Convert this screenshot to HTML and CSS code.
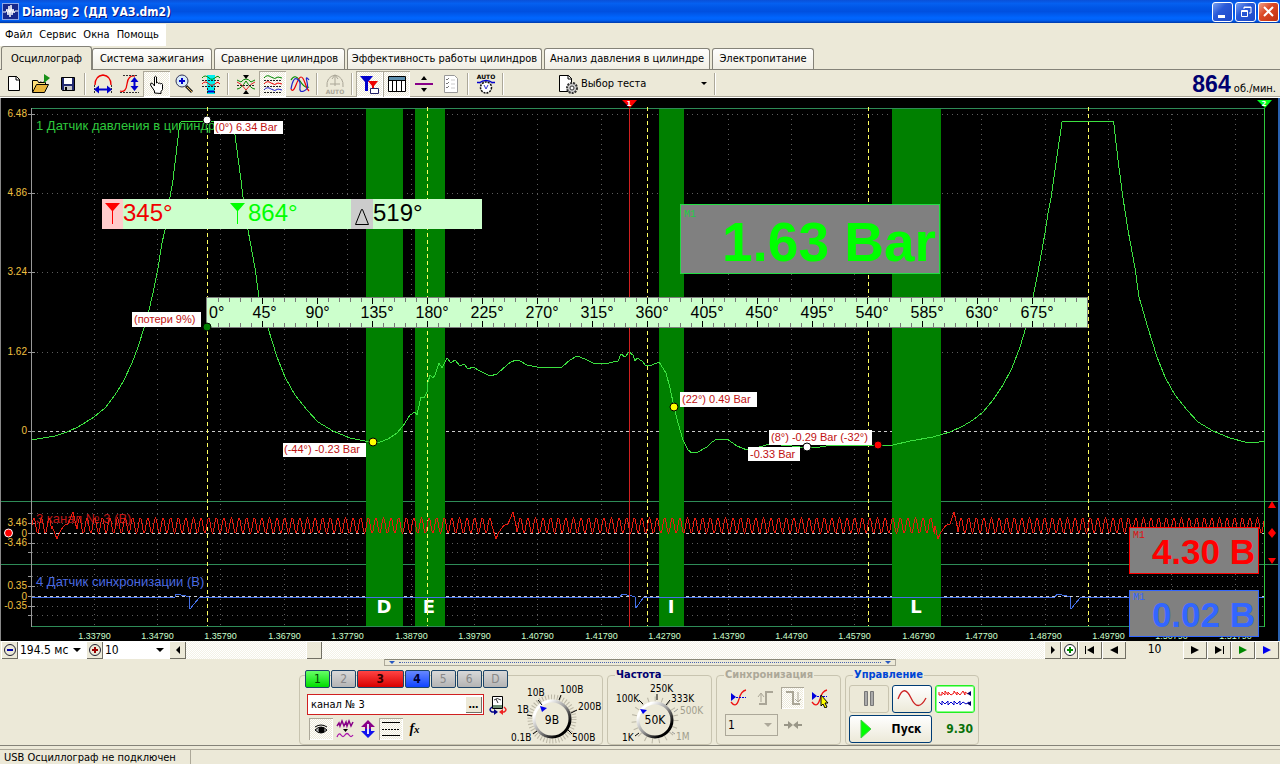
FILE: index.html
```html
<!DOCTYPE html>
<html lang="ru">
<head>
<meta charset="utf-8">
<title>Diamag 2 (ДД УАЗ.dm2)</title>
<link rel="stylesheet" href="styles.css">
</head>
<body>
<header class="titlebar">
  <svg class="app-icon" width="17" height="17" viewBox="0 0 17 17"><rect x=".5" y=".5" width="16" height="16" fill="#16288c" stroke="#8fa8e8"/><path d="M1 9h3l1-3 1 6 1-9 1 11 1-12 1 10 1-6 1 4 1-2h3" fill="none" stroke="#fff"/></svg>
  <h1 class="title">Diamag 2 (ДД УАЗ.dm2)</h1>
  <button class="win-btn" aria-label="Свернуть"><svg width="18" height="18" viewBox="0 0 18 18"><path d="M4 12h7v3H4z" fill="#fff"/></svg></button>
  <button class="win-btn" aria-label="Восстановить"><svg width="18" height="18" viewBox="0 0 18 18" fill="none" stroke="#fff"><path d="M7 6V4h7v6h-2M7 4.500h7"/><path d="M4.500 7.500h6v6h-6zM4 8.500h7"/></svg></button>
  <button class="win-btn close" aria-label="Закрыть"><svg width="18" height="18" viewBox="0 0 18 18"><path d="M4 4l9 9M13 4l-9 9" stroke="#fff" stroke-width="2"/></svg></button>
</header>
<nav class="menubar"><a href="#">Файл</a><a href="#">Сервис</a><a href="#">Окна</a><a href="#">Помощь</a></nav>
<div class="tabs" role="tablist">
  <button class="tab active t1" role="tab" aria-selected="true">Осциллограф</button>
  <button class="tab t2" role="tab">Система зажигания</button>
  <button class="tab t3" role="tab">Сравнение цилиндров</button>
  <button class="tab t4" role="tab">Эффективность работы цилиндров</button>
  <button class="tab t5" role="tab">Анализ давления в цилиндре</button>
  <button class="tab t6" role="tab">Электропитание</button>
</div>
<div class="toolbar">
  <button class="tool" aria-label="Новый"><svg width="22" height="22" viewBox="0 0 22 22"><path d="M5.500 3.500h8l3 3v11h-11z" fill="#fff" stroke="#000"/><path d="M13 3v4h4" fill="none" stroke="#000"/></svg></button>
  <button class="tool" aria-label="Открыть"><svg width="22" height="22" viewBox="0 0 22 22"><path d="M2.500 19V7.500h5l1 2h7V12" fill="#ffe07a" stroke="#000"/><path d="M2.500 19.500l4-8h12l-4 8z" fill="#e8b53c" stroke="#000"/><path d="M14 1l6 4-6 5z" fill="#189018"/><path d="M14 9q-1 1-4 0" stroke="#000" fill="none"/></svg></button>
  <button class="tool" aria-label="Сохранить"><svg width="22" height="22" viewBox="0 0 22 22"><path d="M4.500 4.500h13v13h-12l-1-1z" fill="#222a72" stroke="#000"/><path d="M7 5h8v6H7z" fill="#fff"/><path d="M7 13h8v4H7z" fill="#c8c8c8"/><path d="M8 14h2v3H8z"/></svg></button>
  <i class="sep"></i>
  <button class="tool" aria-label="Период"><svg width="24" height="22" viewBox="0 0 24 22"><path d="M4 12q0-9 8-10 8 1 8 10" fill="none" stroke="#e00" stroke-width="1.300"/><path d="M3.500 12v8M20.500 12v8" stroke="#333" stroke-dasharray="2 1"/><path d="M5 16.500h14" stroke="#00c" stroke-width="2"/><path d="M3 16.500l5-4v8zM21 16.500l-5-4v8z" fill="#00c"/></svg></button>
  <button class="tool" aria-label="Амплитуда"><svg width="24" height="22" viewBox="0 0 24 22"><path d="M2 18q6 2 7-7 1-9 8-8" fill="none" stroke="#e00" stroke-width="1.300"/><path d="M5 2.500h14M2 19.500h19" stroke="#333" stroke-dasharray="2 1"/><path d="M16.500 6v10" stroke="#00c" stroke-width="2"/><path d="M16.500 4l4 5h-8zM16.500 18l4-5h-8z" fill="#00c"/></svg></button>
  <button class="tool on" aria-label="Рука"><svg width="22" height="22" viewBox="0 0 22 22"><path d="M8.500 20v-2l-4-6 .5-2 1.500.5 2 2.500V4q1-1.500 2 0v6q1-1.500 2 .5 1-1.500 2 .5 1.500-1.500 2 .5v5l-1.500 2v2z" fill="#fff" stroke="#000"/></svg></button>
  <button class="tool" aria-label="Увеличить"><svg width="22" height="22" viewBox="0 0 22 22"><circle cx="9" cy="8" r="6" fill="#d8eaf8" stroke="#335"/><path d="M9 5v6M6 8h6" stroke="#00c" stroke-width="2"/><path d="M13 13l6 6" stroke="#222" stroke-width="3"/><path d="M14 14l5 5" stroke="#e8b04a"/></svg></button>
  <button class="tool" aria-label="Фрагмент"><svg width="24" height="22" viewBox="0 0 24 22"><path d="M8 2h8v19H8z" fill="#0ee"/><g fill="none"><path d="M3 5q3-4 7 0 3 3 7-1 2-2 4 1" stroke="#080"/><path d="M3 11q3-4 7 0 3 3 7-1 2-2 4 1" stroke="#e00"/><path d="M3 7.500h18M3 13.500h18M8.500 15v6M15.500 15v6" stroke="#222" stroke-dasharray="2 1"/><path d="M9 18.500h6" stroke="#00c" stroke-width="2"/></g></svg></button>
  <i class="sep"></i>
  <button class="tool" aria-label="Сжать"><svg width="24" height="22" viewBox="0 0 24 22"><g fill="none"><path d="M3 7l4 2q5-6 10 0l4-2" stroke="#080"/><path d="M3 16q4 0 9-8 5 8 9 8" stroke="#080"/><path d="M3 9q4 1 9 8 5-7 9-8" stroke="#d22"/><path d="M3 12.500h18" stroke="#222" stroke-dasharray="2 1"/></g><path d="M9 2h6l-3 4zM9 21h6l-3-4z"/></svg></button>
  <button class="tool on" aria-label="Раздельно"><svg width="24" height="22" viewBox="0 0 24 22"><g fill="none"><path d="M3 5q3-4 7-1t7 0l4 1" stroke="#080"/><path d="M3 11q3-4 7-1t7 0l4 1" stroke="#e00"/><path d="M3 17q3-4 7-1t7 0l4 1" stroke="#22c"/><path d="M3 7.500h18M3 13.500h18M3 19.500h18" stroke="#222" stroke-dasharray="2 1"/></g></svg></button>
  <button class="tool" aria-label="Вместе"><svg width="24" height="22" viewBox="0 0 24 22" fill="none" stroke-width="1.200"><path d="M3 7q4-7 9 1t9 6" stroke="#080"/><path d="M3 16q2 4 5-4t5-8 4 6 4 8" stroke="#e00"/><path d="M3 16q2-12 6-10t3 8 4 4 3-9 2-2" stroke="#22c"/></svg></button>
  <i class="sep"></i>
  <button class="tool" aria-label="Автомасштаб" disabled><svg width="24" height="24" viewBox="0 0 24 24"><path d="M4 15q-1-10 8-12 9 2 8 12M12 4v10M9 7l3-4 3 4M7 12h10" fill="none" stroke="#aaa697"/><text class="ico-text dim" x="12" y="22">AUTO</text></svg></button>
  <i class="sep"></i>
  <button class="tool on" aria-label="Маркеры"><svg width="22" height="22" viewBox="0 0 22 22"><path d="M1 3h13l-5 6v9H6V9z" fill="#00c"/><path d="M9 8h10l-4 5v5h-2v-5z" fill="#e00"/><path d="M11.500 15.500h8v5h-8z" fill="#fff" stroke="#226"/></svg></button>
  <button class="tool on" aria-label="Таблица"><svg width="22" height="22" viewBox="0 0 22 22"><path d="M2.500 3.500h17v15h-17z" fill="#fff" stroke="#000"/><path d="M3 4h16v3H3z" fill="#5d8fae"/><path d="M2 7.500h18M6.500 7v11M10.500 7v11M15.500 7v11" stroke="#000"/></svg></button>
  <button class="tool" aria-label="Разделить"><svg width="22" height="22" viewBox="0 0 22 22"><path d="M2 10h18v2H2z" fill="#808"/><path d="M8 7h6l-3-4zM8 15h6l-3 4z"/></svg></button>
  <button class="tool" aria-label="Список"><svg width="22" height="22" viewBox="0 0 22 22"><path d="M4.500 2.500h10l3 3v14h-13z" fill="#fff" stroke="#999"/><path d="M6 6l1 1 2-2M6 10l1 1 2-2M6 14l1 1 2-2" fill="none" stroke="#777"/><path d="M11 7h4M11 11h4M11 15h4" stroke="#ccc"/></svg></button>
  <i class="sep"></i>
  <button class="tool" aria-label="Авто"><svg width="24" height="24" viewBox="0 0 24 24"><text class="ico-text" x="12" y="7">AUTO</text><path d="M5 11q7-5 14 0M3 10.500h4M17 10.500h4" stroke="#00c" fill="none" stroke-width="1.500"/><circle cx="12" cy="15.500" r="5.500" fill="#fff" stroke="#111" stroke-width="1.500" stroke-dasharray="2 1"/><path d="M10 13l2 4 2-4" fill="none" stroke="#33c"/></svg></button>
  <i class="sep"></i>
  <button class="test-pick"><svg width="22" height="22" viewBox="0 0 22 22"><path d="M2.500 2.500h9l3 3v13h-12z" fill="#fff" stroke="#000"/><path d="M11 2v4h4" fill="none" stroke="#000"/><circle cx="15" cy="15" r="5" fill="#ccc" stroke="#333" stroke-width="2" stroke-dasharray="2 1"/><circle cx="15" cy="15" r="2" fill="#fff" stroke="#333"/></svg><span>Выбор теста</span><i class="caret"></i></button>
  <i class="sep"></i>
  <div class="rpm"><b>864</b> об./мин.</div>
</div>

<main class="scope">
<svg class="plot" viewBox="0 98 1280 543" role="img" aria-label="Осциллограмма">
  <g id="grid" class="grid"></g>
  <g class="axis">
    <path class="zero" d="M32 431.500H1264M32 533.500H1264M32 596.500H1264"/>
    <path class="frame" d="M31 108.500H1264M1 501.500H1278M1 564.500H1278M31 626.500H1264"/>
    <path class="left" d="M31.500 108V627M28 114.500h7M28 193.500h7M28 272.500h7M28 352.500h7M28 431.500h7M28 513.500h4M28 523.500h7M28 533.500h7M28 543.500h7M28 552.500h4M28 576.500h4M28 586.500h7M28 596.500h7M28 606.500h7M28 615.500h4"/>
  </g>
  <g class="bands"><rect x="366" y="109" width="37" height="517"/><rect x="415" y="109" width="30" height="517"/><rect x="659" y="109" width="25" height="517"/><rect x="892" y="109" width="49" height="517"/></g>
  <g class="phase"><text x="384" y="613">D</text><text x="429" y="613">E</text><text x="671" y="613">I</text><text x="916" y="613">L</text></g>
  <path class="tdc" d="M207.500 107V626M427.500 107V626M647.500 107V626M868.500 107V626M1088.500 107V626"/>
  <g class="ch"><text class="c1" x="36" y="130">1 Датчик давления в цилиндр</text><text class="c3" x="36" y="523">3 канал № 3 (В)</text><text class="c4" x="36" y="586">4 Датчик синхронизации (В)</text></g>
  <g class="scale-y">
    <text x="27" y="117">6.48</text><text x="27" y="196">4.86</text><text x="27" y="275">3.24</text><text x="27" y="355">1.62</text><text x="27" y="434">0</text>
    <text x="27" y="526">3.46</text><text x="27" y="537">0</text><text x="27" y="546">-3.46</text><text x="27" y="589">0.35</text><text x="27" y="600">0</text><text x="27" y="609">-0.35</text>
  </g>
  <g id="scale-x" class="scale-x"></g>
  <polyline class="trace c1" points="32,440 43,438 55,436 67,432 78,427 94,417 105,408 115,395 123,382 132,363 138,347 144,328 149,310 153,293 158,268 162,243 165,230 170,197 173,180 178,138 180,123 182,121 232,121 234,126 235,135 241,180 243,197 248,230 255,268 259,297 268,328 277,357 285,377 295,395 307,410 318,422 333,431 350,438 365,441 373,442 380,442 388,439 397,433 403,426 410,415 415,412 417,415 421,397 424,398 427,392 428,382 430,375 433,378 435,375 439,363 442,368 447,358 451,363 455,360 460,366 464,364 468,369 473,367 480,371 490,376 497,374 507,365 511,362 516,360 520,361 527,365 537,367 555,368 562,367 570,360 577,356 585,359 593,363 605,364 613,362 618,361 621,354 625,357 629,352 633,355 635,361 637,358 642,361 646,366 652,365 659,362 666,373 670,388 674,407 678,423 683,440 688,450 692,453 698,452 707,447 712,442 717,439 727,439 737,446 747,450 759,447 770,444 792,446 800,447 820,447 833,445 873,445 893,445 910,441 933,437 950,432 963,426 973,420 983,412 993,400 1003,385 1012,368 1020,347 1026,327 1033,297 1038,272 1045,233 1048,213 1051,198 1055,170 1062,122 1063,121 1113,121 1114,125 1118,160 1123,198 1128,230 1135,268 1139,297 1148,328 1157,357 1165,377 1175,395 1187,410 1198,422 1213,431 1230,438 1245,442 1254,443 1264,441"/>
  <polyline id="ignition" class="trace c3"/>
  <polyline class="trace c4" points="32,597 175,597 176,594 186,596 189,597 190,609 199,598 210,597 620,597 622,594 632,596 635,597 636,608 643,598 653,597 1055,597 1057,594 1067,596 1070,597 1071,609 1080,598 1090,597 1264,597"/>
  <path class="cursor c3" d="M629.500 108V627"/><path class="cursor c2" d="M1264.500 108V627"/>
  <g class="flag"><path d="M622 100h15l-7 8z" fill="#f00"/><path d="M1257 100h15l-7 8z" fill="#0f2"/><text x="629" y="106">1</text><text x="1264" y="106">2</text></g>
  <path d="M1272 501l4 7h-8zM1272 528l4 5-4 5-4-5zM1272 564l4-6h-8z" fill="#f00"/><circle cx="8.500" cy="533" r="4" fill="#f00" stroke="#fff"/>

  <g class="angles">
    <rect x="102" y="199" width="380" height="30" fill="#cfc"/><rect x="102" y="199" width="21" height="30" fill="#fcc"/><rect x="351" y="199" width="22" height="30" fill="#ccc"/>
    <path d="M105 203h15l-7 8v13h-1v-13z" fill="#f00"/><path d="M230 203h15l-7 8v13h-1v-13z" fill="#0f0"/><path d="M355.500 224.500h13l-6-15h-1z" fill="none" stroke="#000"/>
    <text x="123" y="221" fill="#f00000">345°</text><text x="248" y="221" fill="#0f0">864°</text><text x="373" y="221" fill="#000">519°</text>
  </g>
  <g class="ruler"><rect x="206.500" y="297.500" width="881" height="30"/><g id="ruler"></g></g>
  <g class="meter">
    <rect x="680.500" y="204.500" width="259" height="69" stroke="#2d4"/><text class="m" x="684" y="217" fill="#2c4">M1</text><text class="big" x="936" y="261" fill="#0f0">1.63 Bar</text>
    <rect x="1129.500" y="527.500" width="129" height="46" stroke="#f00"/><text class="m" x="1133" y="538" fill="#d11">M1</text><text class="mid" x="1255" y="564" fill="#f00">4.30 В</text>
    <rect x="1129.500" y="590.500" width="129" height="46" stroke="#36f"/><text class="m" x="1133" y="600" fill="#36f">M1</text><text class="mid" x="1255" y="627" fill="#36f">0.02 В</text>
  </g>
  <g class="note">
    <rect x="214" y="121" width="69" height="13"/><text x="215" y="131">(0°) 6.34 Bar</text>
    <rect x="132" y="312" width="69" height="15"/><text x="134" y="323">(потери 9%)</text>
    <rect x="283" y="443" width="83" height="14"/><text x="284" y="453">(-44°) -0.23 Bar</text>
    <rect x="680" y="392" width="77" height="15"/><text x="682" y="403">(22°) 0.49 Bar</text>
    <rect x="748" y="447" width="52" height="14"/><text x="750" y="458">-0.33 Bar</text>
    <rect x="769" y="430" width="103" height="15"/><text x="771" y="441">(8°) -0.29 Bar (-32°)</text>
  </g>
  <g stroke="#000"><circle cx="207" cy="120" r="4" fill="#fff"/><circle cx="207" cy="327" r="4" fill="#008000"/><circle cx="373" cy="442" r="4" fill="#ff0"/><circle cx="674" cy="407" r="4" fill="#ff0"/><circle cx="807" cy="447" r="4" fill="#fff"/><circle cx="878" cy="445" r="4" fill="red"/></g>
  <path d="M.500 98V641" stroke="#888"/><path d="M1279 98V641" stroke="#2a62b0" stroke-width="2"/>
</svg>
</main>

<div class="timebar">
  <button class="tb" aria-label="Уменьшить"><svg width="14" height="14" viewBox="0 0 14 14"><circle cx="7" cy="7" r="5.500" fill="none" stroke="#223"/><path d="M4 7h6" stroke="#00a" stroke-width="2"/></svg></button>
  <label class="pick span"><select aria-label="Развёртка"><option>194.5 мс</option></select></label>
  <button class="tb" aria-label="Увеличить"><svg width="14" height="14" viewBox="0 0 14 14"><circle cx="7" cy="7" r="5.500" fill="none" stroke="#223"/><path d="M4 7h6M7 4v6" stroke="#900" stroke-width="2"/></svg></button>
  <label class="pick mult"><select aria-label="Множитель"><option>10</option></select></label>
  <button class="tb" aria-label="Влево"><svg width="10" height="10" viewBox="0 0 10 10"><path d="M7 1v8L3 5z"/></svg></button>
  <div class="track"><i class="thumb"></i></div>
  <button class="tb" aria-label="Вправо"><svg width="10" height="10" viewBox="0 0 10 10"><path d="M3 1v8l4-4z"/></svg></button>
  <button class="tb" aria-label="Добавить"><svg width="14" height="14" viewBox="0 0 14 14"><circle cx="7" cy="7" r="5.500" fill="#fff" stroke="#223"/><path d="M4 7h6M7 4v6" stroke="#080" stroke-width="2"/></svg></button>
  <button class="tb w" aria-label="В начало"><svg width="14" height="10" viewBox="0 0 14 10"><path d="M2 1h1v8H2zM4 5l7-4v8z"/></svg></button>
  <button class="tb w" aria-label="Назад"><svg width="14" height="10" viewBox="0 0 14 10"><path d="M3 5l8-4v8z"/></svg></button>
  <output class="page-no">10</output>
  <button class="tb w" aria-label="Вперёд"><svg width="14" height="10" viewBox="0 0 14 10"><path d="M11 5L3 1v8z"/></svg></button>
  <button class="tb w" aria-label="В конец"><svg width="14" height="10" viewBox="0 0 14 10"><path d="M11 1h1v8h-1zM10 5L3 1v8z"/></svg></button>
  <button class="tb w" aria-label="Воспроизвести"><svg width="14" height="10" viewBox="0 0 14 10"><path d="M11 5L3 1v8z" fill="#080"/></svg></button>
  <button class="tb w" aria-label="Воспроизвести всё"><svg width="14" height="10" viewBox="0 0 14 10"><path d="M11 5L3 1v8z" fill="#00e"/></svg></button>
</div>
<div class="split-row"><div class="splitter"><i></i><b></b><i></i></div></div>

<section class="panel">
  <div class="group channel">
    <div class="ch-left">
      <div class="ch-buttons"><button class="chb g">1</button><button class="chb">2</button><button class="chb r">3</button><button class="chb b">4</button><button class="chb">5</button><button class="chb">6</button><button class="chb">D</button></div>
      <div class="ch-name"><div class="name-box"><input type="text" value="канал № 3" aria-label="Название канала"><button class="dots" aria-label="Выбрать">…</button></div>
        <svg width="20" height="20" viewBox="0 0 20 20"><path d="M4.500 1.500h10v12h-10z" fill="#fff" stroke="#000"/><path d="M5 10h9v3H5z" fill="#6b8b70"/><path d="M6 5q3-3 7 0M8 4l2 4" stroke="#333" fill="none"/><path d="M4 12q-4 3 0 5h3" fill="none" stroke="#008" stroke-width="1.500"/><path d="M6 14l4 3-4 3z" fill="#008"/><path d="M16 12q4 3 0 5h-2" fill="none" stroke="#e22" stroke-width="1.500"/><path d="M15 14l-4 3 4 3z" fill="#e22"/></svg></div>
      <div class="ch-tools">
        <button class="mini on" aria-label="Видимость"><svg width="20" height="20" viewBox="0 0 20 20"><path d="M4 11q6-6 12 0-6 6-12 0z" fill="#bbb" stroke="#000"/><circle cx="10.500" cy="11" r="3"/><path d="M4 8q6-4 12 0" stroke="#000" fill="none"/></svg></button>
        <button class="mini" aria-label="Фильтр"><svg width="20" height="20" viewBox="0 0 20 20"><path d="M2 7l2-3 1 3 2-5 2 5 2-4 1 4 2-5 2 5 2-4" fill="none" stroke="#808" stroke-width="1.500"/><path d="M8 10h5l-2.500 3z"/><path d="M2 18q2-5 4-2t4 0 4 0 4 0" fill="none" stroke="#a1a" stroke-width="1.300"/></svg></button>
        <button class="mini" aria-label="Инверсия"><svg width="20" height="20" viewBox="0 0 20 20"><path d="M10 1l7 7h-4v2H7V8H3z" fill="#808"/><path d="M10 19l7-7h-4v-2H7v2H3z" fill="#11e"/><path d="M10 5v10" stroke="#e8e0f8" stroke-width="2"/></svg></button>
        <button class="mini on" aria-label="Сетка"><svg width="20" height="20" viewBox="0 0 20 20"><path d="M1 3.500h18M1 16.500h18" stroke="#000"/><path d="M1 10.500h18" stroke="#000" stroke-dasharray="2 1"/></svg></button>
        <button class="mini fx">f<small>x</small></button>
      </div>
    </div>
    <svg class="knob" width="94" height="66" viewBox="508 680 94 66" role="img" aria-label="9В">
      <defs><linearGradient id="rim" x1="0" y1="0" x2="1" y2="1"><stop offset=".2" stop-color="#fff"/><stop offset=".5" stop-color="#999"/><stop offset=".8" stop-color="#000"/></linearGradient></defs>
      <circle class="teeth" cx="552" cy="719" r="22"/><circle cx="552" cy="719" r="18" fill="#ece9d8" stroke="url(#rim)" stroke-width="3"/><path d="M540 706l7 2-5 4z" fill="#00e"/>
      <path d="M538 700l4 5M561 695l-2 5M577 710l-6 3M527 715l5 1M533 734l4-3M572 734l-4-4" stroke="#000"/>
      <g class="knob-t"><text x="527" y="696">10В</text><text x="560" y="693">100В</text><text x="517" y="713">1В</text><text x="578" y="710">200В</text><text x="511" y="741">0.1В</text><text x="572" y="741">500В</text><text class="val" x="552" y="724">9В</text></g>
    </svg>
  </div>
  <fieldset class="group freq"><legend>Частота</legend>
    <svg class="knob" width="98" height="62" viewBox="611 682 98 62" role="img" aria-label="50K">
      <circle class="teeth wide" cx="656" cy="720" r="21"/><circle cx="656" cy="720" r="17" fill="#ece9d8" stroke="url(#rim)" stroke-width="3"/><path d="M641 709l7 1-4 4z" fill="#00e"/>
      <path d="M640 700l4 4M658 694v6M671 700l-4 5M636 736l4-3" stroke="#000"/><path d="M679 709l-4 3M676 734l-3-2" stroke="#999"/>
      <g class="knob-t"><text x="651" y="692">250K</text><text x="617" y="702">100K</text><text x="672" y="702">333K</text><text class="off" x="681" y="714">500K</text><text x="623" y="741">1K</text><text class="off" x="677" y="740">1M</text><text class="val" x="656" y="724">50K</text></g>
    </svg>
  </fieldset>
  <fieldset class="group sync"><legend>Синхронизация</legend>
    <div class="sync-row">
      <button class="mini" aria-label="Уровень"><svg width="20" height="20" viewBox="0 0 20 20"><path d="M2 14q5 7 8-3 2-8 7-9" fill="none" stroke="#e11" stroke-width="1.300"/><path d="M2 5l5 4-5 4z" fill="#00d"/><path d="M7 9.500h10" stroke="#00d" stroke-dasharray="2 1"/></svg></button>
      <button class="mini" aria-label="Фронт"><svg width="20" height="20" viewBox="0 0 20 20" fill="none" stroke="#aaa697" stroke-width="2"><path d="M3 16h7V4h7"/><path d="M5 14V6M2 9l3-4 3 4" stroke-width="1"/></svg></button>
      <button class="mini on" aria-label="Спад"><svg width="20" height="20" viewBox="0 0 20 20" fill="none" stroke="#aaa697" stroke-width="2"><path d="M3 4h7v12h7"/><path d="M15 4v10M12 11l3 3 3-3" stroke-width="1"/></svg></button>
      <button class="mini" aria-label="Курсор"><svg width="20" height="20" viewBox="0 0 20 20"><path d="M2 14q5 7 8-3 2-8 7-9" fill="none" stroke="#e11" stroke-width="1.300"/><path d="M2 4l5 4-5 4z" fill="#00d"/><path d="M7 8.500h10" stroke="#00d" stroke-dasharray="2 1"/><path d="M11 7v11l2-2 2 4 2-1-2-4h3z" fill="#ff0" stroke="#000"/></svg></button>
    </div>
    <div class="sync-row two"><label class="pick sync-pick"><select disabled aria-label="Канал синхронизации"><option>1</option></select></label>
      <svg width="20" height="12" viewBox="0 0 20 12"><path d="M1 6h5M14 6h5" stroke="#999687" stroke-width="2"/><path d="M5 2v8l5-4zM15 2v8l-5-4z" fill="#999687"/></svg></div>
  </fieldset>
  <fieldset class="group ctrl"><legend>Управление</legend>
    <div class="ctrl-grid">
      <button class="big-btn off" aria-label="Пауза"><svg width="16" height="18" viewBox="0 0 16 18"><path d="M3.500 1.500h3v14h-3zM9.500 1.500h3v14h-3z" fill="#aaa" stroke="#777"/></svg></button>
      <button class="big-btn" aria-label="Один"><svg width="32" height="22" viewBox="0 0 32 22"><path d="M2 11Q8-5 15 10t15 0" fill="none" stroke="#c22" stroke-width="1.300"/></svg></button>
      <button class="big-btn sel" aria-label="Непрерывно"><svg width="34" height="22" viewBox="0 0 34 22"><path d="M1 4v3h3V4l3 3V3l3 4V4l3 3 3-2V3l3 4V4l3 3 3-4 2 4V4l3 2" fill="none" stroke="#e11"/><path d="M1 14l3 3v-4l3 3 3-3v4l3-3 3 3v-4l3 3 3-3v4l3-3 3 2 3-2" fill="none" stroke="#00c"/><path d="M33 3v5l-4-2.500zM33 13v5l-4-2.500z" fill="#006"/></svg></button>
      <button class="big-btn start"><svg width="12" height="20" viewBox="0 0 12 20"><path d="M1 1l10 9-10 9z" fill="#0f0" stroke="#4c4"/></svg><span>Пуск</span></button>
      <output class="ver">9.30</output>
    </div>
  </fieldset>
</section>
<footer class="status"><span>USB Осциллограф не подключен</span></footer>
<script src="script.js"></script>
</body>
</html>
```
FILE: styles.css
```css
*{box-sizing:border-box}
body{margin:0;min-height:100vh;display:flex;flex-direction:column;background:#ece9d8;font:11px/14px "DejaVu Sans Condensed","DejaVu Sans",sans-serif;color:#000}
button{font:inherit;color:inherit;padding:0;border:0;background:none;display:flex;align-items:center;justify-content:center}
button svg,.knob,.plot{display:block;flex:none}
.titlebar{display:flex;align-items:center;height:23px;padding:0 1px 0 2px;gap:2px;background:linear-gradient(#0a50d8,#0560f0 15%,#0055e5 35%,#0050e0 50%,#0066ff 78%,#0060f5 88%,#0038a8)}
.title{flex:1;margin:0 0 0 1px;font:bold 12px/18px "DejaVu Sans Condensed",sans-serif;color:#fff;text-shadow:1px 1px #0a1883}
.win-btn{width:21px;height:20px;border:1px solid #fff;border-radius:3px;background:linear-gradient(135deg,#7aa0f0,#2a5ad8 40%,#1c48c8)}
.win-btn.close{background:linear-gradient(135deg,#f0a088,#dc4a26 40%,#c03010)}
.menubar{display:flex;align-self:flex-start;gap:7px;height:22px;margin-top:1px;padding:4px 7px 0 5px;background:#fff}
.menubar a{color:#000;text-decoration:none}
.tabs{display:flex;align-items:flex-end;gap:2px;height:24px;border-bottom:1px solid #848278;padding-left:1px}
.tab{height:21px;border:1px solid #848278;border-bottom:0;border-radius:3px 3px 0 0;background:linear-gradient(#fefefd,#f0eee4);white-space:nowrap}
.tab.active{height:24px;margin-bottom:-1px;margin-right:-2px;background:#ece9d8}
.t1{width:91px}.t2{width:120px}.t3{width:131px}.t4{width:195px}.t5{width:166px}.t6{width:102px}
.toolbar{display:flex;align-items:center;height:28px;padding:0 4px 0 0;border-bottom:1px solid #fff;box-shadow:inset 0 -1px #aca899}
.tool{width:27px;height:26px}
.on{background:repeating-conic-gradient(#fff 0 25%,#ece9d8 0 50%) 0 0/2px 2px;box-shadow:inset 1px 1px #aca899,inset -1px -1px #fff}
.sep{width:8px;height:22px;background:linear-gradient(90deg,transparent 3px,#aca899 3px 4px,#fff 4px 5px,transparent 5px)}
.ico-text{font:bold 6px "DejaVu Sans",sans-serif;text-anchor:middle}
.dim{fill:#aaa697}
.test-pick{margin-left:50px;width:154px;gap:2px}
.test-pick span{flex:1;text-align:left}
.caret{border:3px solid transparent;border-top:3px solid #000;border-bottom:0;margin-right:4px}
.rpm{margin-left:auto;white-space:nowrap}
.rpm b{font:bold 23px/26px "Liberation Sans",sans-serif;color:#000070}
.scope{background:#000}
.plot{width:100%;height:auto;font-family:"Liberation Sans",sans-serif}
.grid{stroke:#5c5c5c;stroke-dasharray:1 4}
.zero{stroke:#ccc;stroke-dasharray:3 3}
.frame{stroke:#2e8b57}
.left{stroke:#999}
.bands{fill:#008000}
.phase{font:bold 18px "DejaVu Sans",sans-serif;fill:#fff;text-anchor:middle}
.tdc{stroke:#ffff60;stroke-dasharray:4 3}
.ch{font-size:13px}
.ch .c1{fill:#2ec83c}.ch .c3{fill:#c01818}.ch .c4{fill:#4a6ae0}
.scale-y{font-size:10px;fill:#f0c040;text-anchor:end}
.scale-x{font-size:9px;fill:#cfc;text-anchor:middle}
.trace{fill:none;stroke-width:1;shape-rendering:crispEdges}
.trace.c1{stroke:#3ce040}.trace.c3{stroke:#e81c10}.trace.c4{stroke:#4470e8}
.cursor.c3{stroke:#d02020}.cursor.c2{stroke:#2ec83c}
.flag{font:bold 7px "DejaVu Sans",sans-serif;fill:#fff;text-anchor:middle}
.angles{font-size:24px}
.ruler rect{fill:#cfc;stroke:#808080}
.ruler{font-size:16px}
.meter rect{fill:#808080}
.m{font:10px "Liberation Mono",monospace}
.big{font-weight:bold;font-size:55px;text-anchor:end}
.mid{font-weight:bold;font-size:35px;text-anchor:end}
.note{font-size:11px;fill:#c01010}
.note rect{fill:#fff}
.timebar{display:flex;height:18px;padding:0 1px;background:#ece9d8}
.tb{flex:none;width:17px;background:#ece9d8;box-shadow:inset 1px 1px #fff,inset -1px -1px #716f64}
.tb.w{width:24px}
.pick{position:relative;display:flex;background:#fff}
.pick::after{content:"";position:absolute;right:5px;top:50%;margin-top:-2px;border:4px solid transparent;border-top-color:#000;border-bottom:0;pointer-events:none}
.pick select{appearance:none;width:100%;border:0;padding:0 2px;background:none;font:12px/16px "DejaVu Sans Condensed",sans-serif;color:#000;opacity:1}
.span{width:68px}.mult{width:66px}
.track{flex:1;background:repeating-conic-gradient(#fff 0 25%,#f3f1e6 0 50%) 0 0/2px 2px}
.thumb{display:block;width:16px;height:18px;margin-left:14%;background:#ece9d8;box-shadow:inset 1px 1px #fff,inset -1px -1px #716f64}
.page-no{flex:none;width:57px;text-align:center;font-size:12px;line-height:17px}
.split-row{display:flex;justify-content:center}
.splitter{display:flex;align-items:center;gap:4px;width:40%;height:7px;padding:0 4px;border:1px solid #aca899;border-top-color:#8a8878}
.splitter b{flex:1;border-top:1px dotted #4a64b0}
.splitter i{border:3px solid transparent;border-top-color:#2858c0;border-bottom:0}
.panel{display:flex;justify-content:center;gap:4px;height:80px;padding:0 2px 1px 0;border-bottom:1px solid #848278}
.group{margin:9px 0 0;padding:0;min-width:0;height:70px;border:1px solid #c8c4b0;border-radius:4px}
fieldset.group{margin-top:2px;height:77px}
.group legend{margin-left:7px;padding:0 1px;font:bold 11px/14px "DejaVu Sans Condensed",sans-serif;color:#000070}
.channel{display:flex;width:304px}
.ch-left{width:208px;margin-top:-6px;padding-left:5px}
.ch-buttons{display:flex;gap:1px}
.chb{width:26px;height:18px;border:1px solid #1c4468;border-radius:2px;background:linear-gradient(#d8d8d8,#b4b4b4);color:#888;font-size:12px}
.chb.g{background:linear-gradient(#6f6,#0d0);color:#040}
.chb.r{width:48px;background:linear-gradient(#f44,#d80000);color:#300;font-weight:bold}
.chb.b{background:linear-gradient(#68f,#14f);color:#003;font-weight:bold}
.ch-name{display:flex;align-items:center;gap:4px;margin:6px 0 3px 2px}
.name-box{display:flex;width:177px;height:21px;border:1px solid #d02020;background:#fff;padding:1px}
.name-box input{flex:1;min-width:0;border:0;padding:0 2px;font:11px/14px "DejaVu Sans Condensed",sans-serif}
.dots{width:17px;background:#ece9d8;box-shadow:inset 1px 1px #fff,inset -1px -1px #716f64;line-height:8px;font-weight:bold}
.ch-tools{display:flex;padding-left:4px}
.mini{width:23px;height:22px}
.fx{font:italic bold 14px/16px "Liberation Serif",serif}
.fx small{font-size:11px}
.ch-tools .on{width:24px}
.teeth{fill:none;stroke:#bbb7a6;stroke-width:5;stroke-dasharray:1 2}
.teeth.wide{stroke-dasharray:1 6}
.channel .knob{margin-top:4px}
.knob-t{font:10px "DejaVu Sans Condensed",sans-serif}
.knob-t .val{font-size:12px;text-anchor:middle}
.knob-t .off{fill:#a09d8c}
.freq{width:105px}.freq .knob{margin-left:2px}
.sync{width:125px}.group.sync legend{color:#aca899}
.sync-row{display:flex;align-items:center;gap:4px;padding:5px 0 0 10px}
.sync-row.two{padding-left:8px;gap:5px}
.sync-pick{width:53px;height:22px;background:none;border:1px solid #aca899}
.sync-pick::after{border-top-color:#aca899}
.ctrl{width:134px}.group.ctrl legend{color:#0046d5}
.ctrl-grid{display:grid;grid-template-columns:40px 40px 40px;gap:2px 3px;padding:3px 0 0 3px}
.big-btn{height:28px;border:1px solid #003c74;border-radius:3px;background:linear-gradient(#fff,#ece9d8)}
.big-btn.off{background:#ece9d8;border-color:#c8c4b0}
.big-btn.sel{border-color:#2e2;background:#fff;box-shadow:inset 0 0 0 1px #8f8}
.start{grid-column:span 2;gap:20px;font:bold 12px/16px "DejaVu Sans Condensed",sans-serif}
.ver{align-self:center;justify-self:end;font:bold 12px/16px "DejaVu Sans Condensed",sans-serif;color:#087008;padding-right:2px}
.status{flex:1;display:flex;margin-top:3px;border-top:1px solid #aca899}
.status span{width:191px;padding:1px 4px 0;border-right:1px solid #aca899;white-space:nowrap}
```
FILE: script.js
```js
const NS = "http://www.w3.org/2000/svg";
function add(parent, tag, attrs, text) {
  const el = document.createElementNS(NS, tag);
  for (const k in attrs) el.setAttribute(k, attrs[k]);
  if (text) el.textContent = text;
  parent.appendChild(el);
}

// Grid and time scale
const grid = document.getElementById("grid");
const scaleX = document.getElementById("scale-x");
for (let i = 0; i < 19; i++) {
  const x = Math.floor(94 + i * 63.4) + 0.5;
  add(grid, "path", { d: `M${x} 114V626` });
  add(scaleX, "text", { x: x, y: 639 }, (1.3379 + i * 0.01).toFixed(5));
}
for (const y of [114, 193, 272, 352, 513, 523, 543, 552, 576, 586, 606, 615]) {
  add(grid, "path", { d: `M32 ${y + 0.5}H1264` });
}

// Crank angle ruler: a tick every 9 degrees, a label every 45
const ruler = document.getElementById("ruler");
for (let i = 0; i < 80; i++) {
  const x = Math.floor(207 + i * 11.01) + 0.5;
  const major = i % 5 === 0;
  const len = major ? 6 : 4;
  if (i) add(ruler, "path", { d: `M${x} 298v${len}M${x} 327v-${len}`, stroke: major ? "#000" : "#777" });
  if (major) add(ruler, "text", { x: i === 0 ? 209 : i === 5 ? x - 10 : x - 12, y: 318 }, i * 9 + "°");
}

// Channel 3: ripple with a dip and a spike at each event
const dips = [[52, 57, 68, 73, 77], [492, 496, 508, 513, 517], [935, 938, 950, 954, 958]];
const pts = [];
for (let x = 32; x <= 1264; x += 0.5) {
  let y = 525.5 - 7.5 * Math.sin((x - 32) * 2 * Math.PI / 7.6);
  for (const [a, b, c, d, e] of dips) {
    if (x >= a && x < b) y = 526 + 13 * (x - a) / (b - a);
    else if (x >= b && x < c) y = 524 + 15 * Math.pow(1 - (x - b) / (c - b), 2);
    else if (x >= c && x < d) y = 524 - 12 * (x - c) / (d - c);
    else if (x >= d && x < e) y = 512 + 18 * (x - d) / (e - d);
  }
  pts.push(x + "," + y.toFixed(1));
}
document.getElementById("ignition").setAttribute("points", pts.join(" "));
```
